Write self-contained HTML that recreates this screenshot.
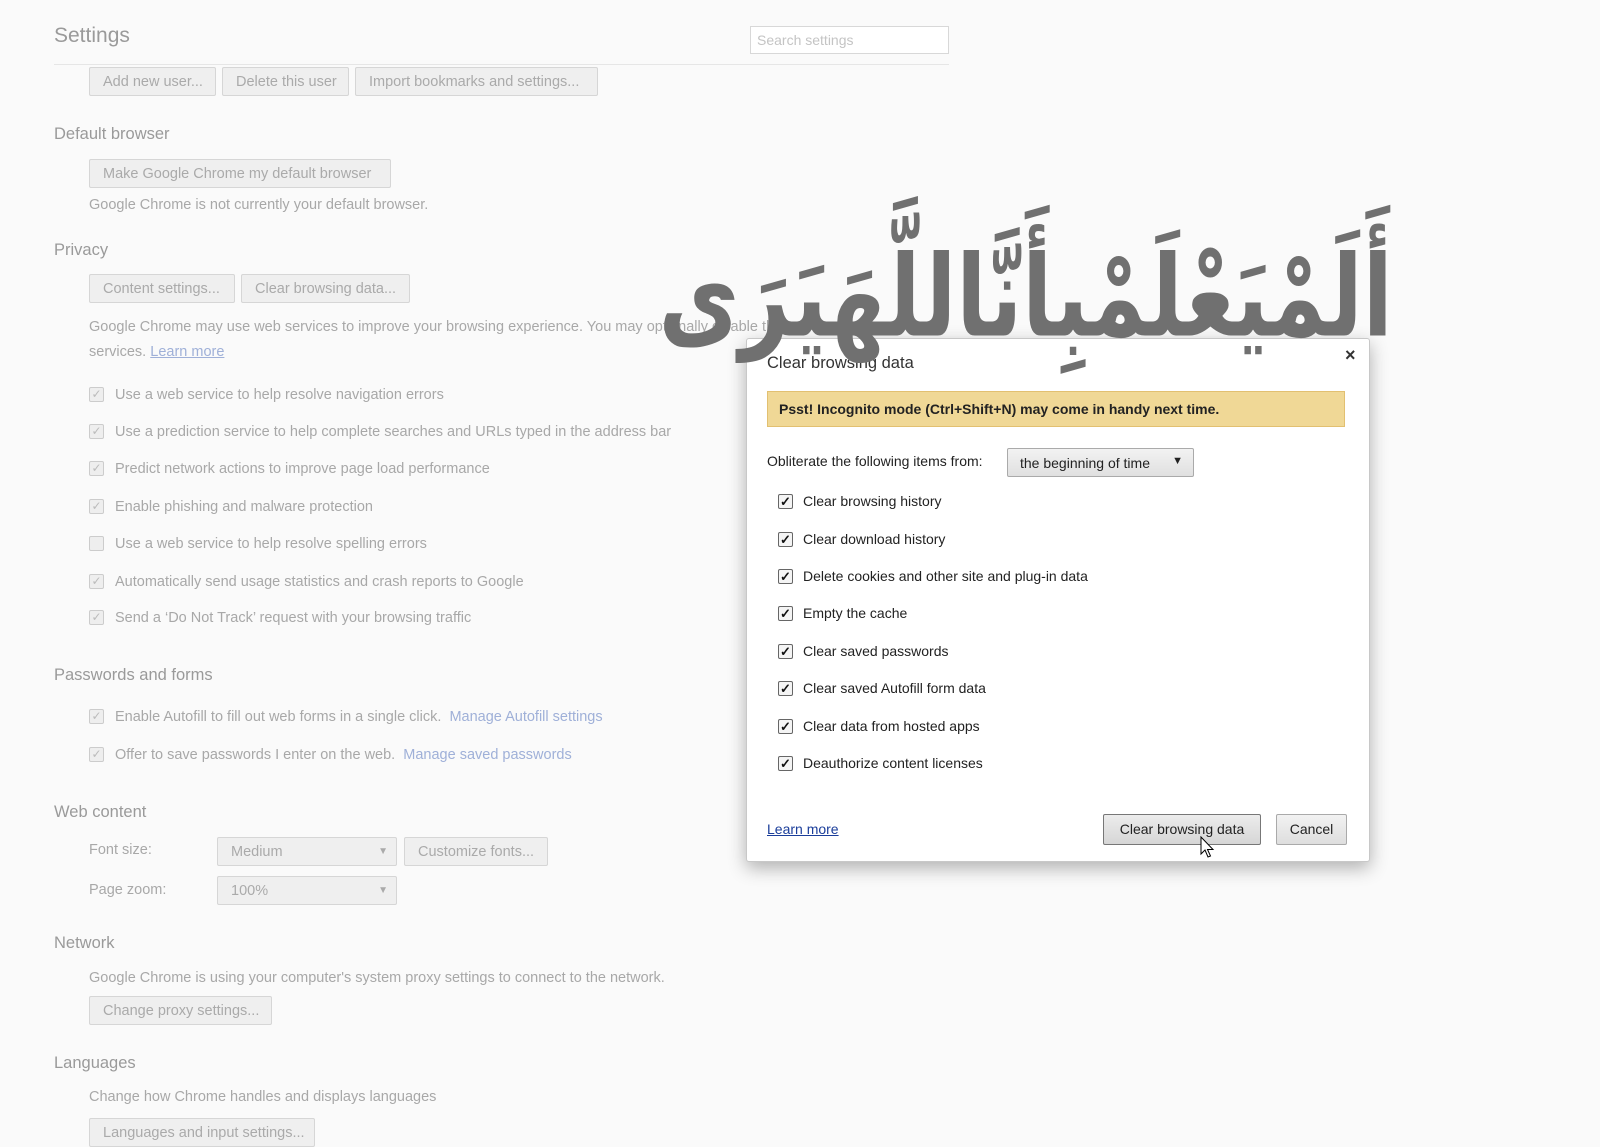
<!DOCTYPE html>
<html><head><meta charset="utf-8"><style>
*{margin:0;padding:0;box-sizing:border-box}
body{width:1600px;height:1131px;overflow:hidden;background:#fafafa;font-family:"Liberation Sans",sans-serif;color:#a8a8a8;position:relative}
.a{position:absolute;white-space:nowrap}
.t{font-size:14.5px;line-height:18px;transform:translateY(-9px)}
.h{font-size:16.5px;color:#9a9a9a;transform:translateY(-10px)}
.b{position:absolute;border:1px solid #d6d6d6;background:#efefef;border-radius:2px;font-size:14.5px;color:#aaa;display:flex;align-items:center;padding-left:13px;white-space:nowrap}
.cb{position:absolute;width:15px;height:15px;border:1px solid #ccc;background:#eee;border-radius:2px;font-size:12px;line-height:13px;text-align:center;color:#bbb}
.lk{color:#9fb0d8}
.dcb{position:absolute;width:15px;height:15px;border:1px solid #666;background:#f4f4f4;border-radius:2px;font-size:13px;line-height:13px;text-align:center;color:#111;font-weight:bold}
.dt{position:absolute;font-size:14px;color:#222;white-space:nowrap;transform:translateY(-9px)}
</style></head><body>
<div class="a" style="left:54px;top:24px;font-size:21px;color:#9a9a9a">Settings</div>
<div class="a" style="left:750px;top:26px;width:199px;height:28px;border:1px solid #d8d8d8;background:#fff;font-size:14px;color:#c4c4c4;padding:5px 6px">Search settings</div>
<div class="a" style="left:54px;top:64px;width:895px;height:1px;background:#e6e6e6"></div>
<div class="b" style="left:89px;top:67px;width:127px;height:29px">Add new user...</div>
<div class="b" style="left:222px;top:67px;width:127px;height:29px">Delete this user</div>
<div class="b" style="left:355px;top:67px;width:243px;height:29px">Import bookmarks and settings...</div>
<div class="a h" style="left:54px;top:135px">Default browser</div>
<div class="b" style="left:89px;top:159px;width:302px;height:29px">Make Google Chrome my default browser</div>
<div class="a t" style="left:89px;top:205px">Google Chrome is not currently your default browser.</div>
<div class="a h" style="left:54px;top:251px">Privacy</div>
<div class="b" style="left:89px;top:274px;width:146px;height:29px">Content settings...</div>
<div class="b" style="left:241px;top:274px;width:169px;height:29px">Clear browsing data...</div>
<div class="a t" style="left:89px;top:327px">Google Chrome may use web services to improve your browsing experience. You may optionally disable these</div>
<div class="a t" style="left:89px;top:352px">services. <span class="lk" style="text-decoration:underline">Learn more</span></div>
<div class="cb" style="left:89px;top:387px">✓</div><div class="a t" style="left:115px;top:395px">Use a web service to help resolve navigation errors</div>
<div class="cb" style="left:89px;top:424px">✓</div><div class="a t" style="left:115px;top:432px">Use a prediction service to help complete searches and URLs typed in the address bar</div>
<div class="cb" style="left:89px;top:461px">✓</div><div class="a t" style="left:115px;top:469px">Predict network actions to improve page load performance</div>
<div class="cb" style="left:89px;top:499px">✓</div><div class="a t" style="left:115px;top:507px">Enable phishing and malware protection</div>
<div class="cb" style="left:89px;top:536px"></div><div class="a t" style="left:115px;top:544px">Use a web service to help resolve spelling errors</div>
<div class="cb" style="left:89px;top:574px">✓</div><div class="a t" style="left:115px;top:582px">Automatically send usage statistics and crash reports to Google</div>
<div class="cb" style="left:89px;top:610px">✓</div><div class="a t" style="left:115px;top:618px">Send a ‘Do Not Track’ request with your browsing traffic</div>
<div class="a h" style="left:54px;top:676px">Passwords and forms</div>
<div class="cb" style="left:89px;top:709px">✓</div><div class="a t" style="left:115px;top:717px">Enable Autofill to fill out web forms in a single click.&nbsp; <span class="lk">Manage Autofill settings</span></div>
<div class="cb" style="left:89px;top:747px">✓</div><div class="a t" style="left:115px;top:755px">Offer to save passwords I enter on the web.&nbsp; <span class="lk">Manage saved passwords</span></div>
<div class="a h" style="left:54px;top:813px">Web content</div>
<div class="a t" style="left:89px;top:850px">Font size:</div>
<div class="b" style="left:217px;top:837px;width:180px;height:29px">Medium<span style="position:absolute;right:8px;font-size:10px">▼</span></div>
<div class="b" style="left:404px;top:837px;width:144px;height:29px">Customize fonts...</div>
<div class="a t" style="left:89px;top:890px">Page zoom:</div>
<div class="b" style="left:217px;top:876px;width:180px;height:29px">100%<span style="position:absolute;right:8px;font-size:10px">▼</span></div>
<div class="a h" style="left:54px;top:944px">Network</div>
<div class="a t" style="left:89px;top:978px">Google Chrome is using your computer's system proxy settings to connect to the network.</div>
<div class="b" style="left:89px;top:996px;width:183px;height:29px">Change proxy settings...</div>
<div class="a h" style="left:54px;top:1064px">Languages</div>
<div class="a t" style="left:89px;top:1097px">Change how Chrome handles and displays languages</div>
<div class="b" style="left:89px;top:1118px;width:226px;height:29px">Languages and input settings...</div>

<div class="a" style="left:746px;top:338px;width:624px;height:524px;background:#fff;border:1px solid #c8c8c8;border-radius:3px;box-shadow:0 6px 18px rgba(0,0,0,.3)"></div>
<div class="a" style="left:767px;top:354px;font-size:16.5px;color:#333">Clear browsing data</div>
<div class="a" style="left:1345px;top:345px;font-size:18px;color:#333;font-weight:bold">×</div>
<div class="a" style="left:767px;top:391px;width:578px;height:36px;background:#f0d896;border:1px solid #e2c071;font-size:14px;font-weight:bold;color:#222;padding:9px 11px">Psst! Incognito mode (Ctrl+Shift+N) may come in handy next time.</div>
<div class="dt" style="left:767px;top:462px">Obliterate the following items from:</div>
<div class="a" style="left:1007px;top:448px;width:187px;height:29px;border:1px solid #aaa;background:linear-gradient(#f2f2f2,#e0e0e0);border-radius:2px;font-size:14px;color:#222;padding:6px 12px">the beginning of time<span style="position:absolute;right:10px;top:6px;font-size:11px">▼</span></div>
<div class="dcb" style="left:778px;top:494px">✓</div><div class="dt" style="left:803px;top:502px">Clear browsing history</div>
<div class="dcb" style="left:778px;top:532px">✓</div><div class="dt" style="left:803px;top:540px">Clear download history</div>
<div class="dcb" style="left:778px;top:569px">✓</div><div class="dt" style="left:803px;top:577px">Delete cookies and other site and plug-in data</div>
<div class="dcb" style="left:778px;top:606px">✓</div><div class="dt" style="left:803px;top:614px">Empty the cache</div>
<div class="dcb" style="left:778px;top:644px">✓</div><div class="dt" style="left:803px;top:652px">Clear saved passwords</div>
<div class="dcb" style="left:778px;top:681px">✓</div><div class="dt" style="left:803px;top:689px">Clear saved Autofill form data</div>
<div class="dcb" style="left:778px;top:719px">✓</div><div class="dt" style="left:803px;top:727px">Clear data from hosted apps</div>
<div class="dcb" style="left:778px;top:756px">✓</div><div class="dt" style="left:803px;top:764px">Deauthorize content licenses</div>
<div class="dt" style="left:767px;top:830px;color:#1a3d9a;text-decoration:underline">Learn more</div>
<div class="a" style="left:1103px;top:814px;width:158px;height:31px;border:1px solid #777;background:linear-gradient(#ececec,#d6d6d6);border-radius:2px;font-size:14px;color:#222;text-align:center;line-height:29px">Clear browsing data</div>
<div class="a" style="left:1276px;top:814px;width:71px;height:31px;border:1px solid #aaa;background:linear-gradient(#f2f2f2,#dedede);border-radius:2px;font-size:14px;color:#222;text-align:center;line-height:29px">Cancel</div>
<svg class="a" style="left:1200px;top:836px" width="16" height="24" viewBox="0 0 16 24"><path d="M1 1 L1 18 L5 14 L8 21 L10.5 20 L7.5 13.5 L13 13.5 Z" fill="#fff" stroke="#000" stroke-width="1"/></svg>

<div class="a" dir="rtl" style="right:207px;top:182px;font-family:'DejaVu Sans',sans-serif;font-size:150px;line-height:230px;color:#707070;font-weight:bold;transform:scale(0.585,0.75);transform-origin:right center">أَلَمْيَعْلَمْبِأَنَّاللَّهَيَرَى</div>
</body></html>
